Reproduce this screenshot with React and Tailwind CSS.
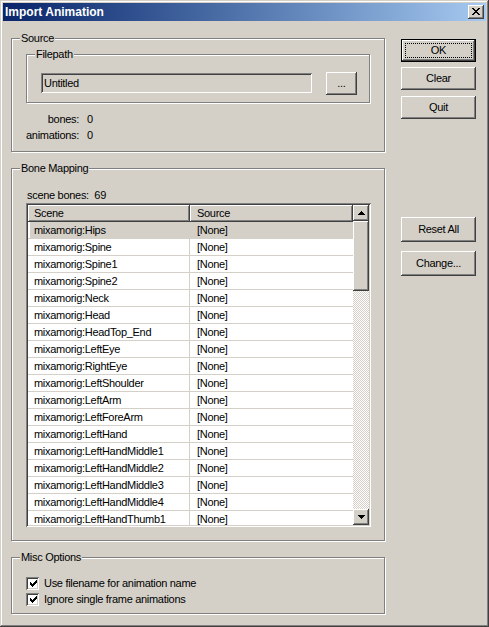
import React from "react";

const bones = [
  "Hips",
  "Spine",
  "Spine1",
  "Spine2",
  "Neck",
  "Head",
  "HeadTop_End",
  "LeftEye",
  "RightEye",
  "LeftShoulder",
  "LeftArm",
  "LeftForeArm",
  "LeftHand",
  "LeftHandMiddle1",
  "LeftHandMiddle2",
  "LeftHandMiddle3",
  "LeftHandMiddle4",
  "LeftHandThumb1",
];

const raised =
  "bg-[#d4d0c8] shadow-[inset_-1px_-1px_0_#404040,inset_1px_1px_0_#ffffff,inset_-2px_-2px_0_#808080]";
const sunken =
  "shadow-[inset_1px_1px_0_#808080,inset_-1px_-1px_0_#ffffff,inset_2px_2px_0_#404040,inset_-2px_-2px_0_#d4d0c8]";
const group =
  "relative border border-[#808080] shadow-[1px_1px_0_#ffffff,inset_1px_1px_0_#ffffff]";
const legend =
  "absolute left-[8px] -top-[8px] px-[1px] leading-[14px] bg-[#d4d0c8]";

function Button({ children, className = "", def = false }) {
  if (def) {
    return (
      <div className={`h-[23px] border border-black flex ${className}`}>
        <div className={`flex-1 flex p-[3px] ${raised}`}>
          <div className="flex-1 flex items-center justify-center border border-dotted border-black">
            {children}
          </div>
        </div>
      </div>
    );
  }
  return (
    <div className={`flex items-center justify-center ${raised} ${className}`}>
      {children}
    </div>
  );
}

function Check({ label }) {
  return (
    <div className="h-[16px] flex items-center">
      <div className={`w-[13px] h-[13px] bg-white flex items-center justify-center ${sunken}`}>
        <svg width="7" height="7" viewBox="0 0 7 7" className="ml-[1px] mt-[1px]">
          <path
            d="M0 2h1v3H0zM1 3h1v3H1zM2 4h1v3H2zM3 3h1v3H3zM4 2h1v3H4zM5 1h1v3H5zM6 0h1v3H6z"
            fill="#000"
          />
        </svg>
      </div>
      <span className="ml-[5px]">{label}</span>
    </div>
  );
}

export default function App() {
  return (
    <div className="w-[489px] h-[627px] bg-[#d4d0c8] flex flex-col overflow-hidden text-black text-[11px] tracking-[-0.3px] font-['Liberation_Sans',Arial,sans-serif] shadow-[inset_-1px_-1px_0_#404040,inset_1px_1px_0_#d4d0c8,inset_-2px_-2px_0_#808080,inset_2px_2px_0_#ffffff]">
      {/* title bar */}
      <div className="mx-[3px] mt-[3px] h-[18px] flex items-center pl-[2px] pr-[2px] bg-linear-to-r from-[#0a246a] to-[#a6caf0]">
        <span className="flex-1 text-white font-bold text-[12px] tracking-normal">Import Animation</span>
        <div className={`w-[16px] h-[14px] flex items-center justify-center ${raised}`}>
          <svg width="8" height="7" viewBox="0 0 8 7" className="-mt-[1px]">
            <path
              d="M0 0h2v1H0zM6 0h2v1H6zM1 1h2v1H1zM5 1h2v1H5zM2 2h4v1H2zM3 3h2v1H3zM2 4h4v1H2zM1 5h2v1H1zM5 5h2v1H5zM0 6h2v1H0zM6 6h2v1H6z"
              fill="#000"
            />
          </svg>
        </div>
      </div>

      <div className="flex pl-[11px]">
        {/* left column */}
        <div className="w-[374px] flex flex-col">
          {/* Source */}
          <div className={`mt-[17px] h-[114px] flex flex-col ${group}`}>
            <span className={legend}>Source</span>
            <div className={`mt-[15px] ml-[14px] w-[344px] h-[49px] flex flex-col ${group}`}>
              <span className={legend}>Filepath</span>
              <div className="mt-[17px] ml-[14px] flex items-start">
                <div className={`mt-[1px] w-[271px] h-[20px] flex items-center pl-[3px] ${sunken}`}>
                  Untitled
                </div>
                <Button className="ml-[14px] w-[31px] h-[23px]">
                  <span className="-mt-[1px]">...</span>
                </Button>
              </div>
            </div>
            <div className="mt-[8px] ml-[15px] flex flex-col">
              <div className="h-[16px] flex items-center">
                <span className="w-[52px] flex justify-end whitespace-nowrap">bones:</span>
                <span className="ml-[8px]">0</span>
              </div>
              <div className="h-[16px] flex items-center">
                <span className="w-[52px] flex justify-end whitespace-nowrap">animations:</span>
                <span className="ml-[8px]">0</span>
              </div>
            </div>
          </div>

          {/* Bone Mapping */}
          <div className={`mt-[16px] h-[373px] flex flex-col ${group}`}>
            <span className={legend}>Bone Mapping</span>
            <div className="mt-[18px] ml-[15px] h-[16px] flex items-center">
              scene bones:&nbsp;&nbsp;69
            </div>
            <div className={`ml-[14px] w-[345px] h-[324px] p-[2px] flex bg-white ${sunken}`}>
              <div className="flex-1 flex flex-col overflow-hidden">
                <div className="h-[17px] flex shrink-0">
                  <div className={`w-[162px] pl-[6px] flex items-center ${raised}`}>Scene</div>
                  <div className={`flex-1 pl-[7px] flex items-center ${raised}`}>Source</div>
                </div>
                {bones.map((b, i) => (
                  <div
                    key={b}
                    className={`h-[17px] shrink-0 flex border-b border-[#d4d0c8] ${i === 0 ? "bg-[#d4d0c8]" : "bg-white"}`}
                  >
                    {i === 0 && <div className="w-[2px] bg-white" />}
                    <div
                      className={`${i === 0 ? "w-[160px] pl-[4px]" : "w-[162px] pl-[6px]"} flex items-center border-r border-[#d4d0c8] whitespace-nowrap`}
                    >
                      mixamorig:{b}
                    </div>
                    <div className="flex-1 pl-[7px] flex items-center">[None]</div>
                  </div>
                ))}
              </div>
              {/* scrollbar */}
              <div className="w-[16px] flex flex-col">
                <div className={`h-[16px] flex items-center justify-center ${raised}`}>
                  <svg width="7" height="4" viewBox="0 0 7 4" className="-mt-[1px]">
                    <path d="M3 0h1v1h1v1h1v1h1v1H0V3h1V2h1V1h1z" fill="#000" />
                  </svg>
                </div>
                <div className={`h-[70px] ${raised}`} />
                <div className="flex-1 bg-[repeating-conic-gradient(#ffffff_0%_25%,#d4d0c8_0%_50%)] bg-[length:2px_2px]" />
                <div className={`h-[16px] flex items-center justify-center ${raised}`}>
                  <svg width="7" height="4" viewBox="0 0 7 4" className="-mt-[1px]">
                    <path d="M0 0h7v1H6v1H5v1H4v1H3V3H2V2H1V1H0z" fill="#000" />
                  </svg>
                </div>
              </div>
            </div>
          </div>

          {/* Misc Options */}
          <div className={`mt-[16px] h-[57px] flex flex-col ${group}`}>
            <span className={legend}>Misc Options</span>
            <div className="mt-[17px] ml-[14px] flex flex-col">
              <Check label="Use filename for animation name" />
              <Check label="Ignore single frame animations" />
            </div>
          </div>
        </div>

        {/* right column */}
        <div className="ml-[16px] w-[75px] flex flex-col">
          <Button def className="mt-[18px]">OK</Button>
          <Button className="mt-[5px] h-[23px]">Clear</Button>
          <Button className="mt-[6px] h-[23px]">Quit</Button>
          <Button className="mt-[98px] h-[25px]">Reset All</Button>
          <Button className="mt-[9px] h-[25px]">Change...</Button>
        </div>
      </div>
    </div>
  );
}
